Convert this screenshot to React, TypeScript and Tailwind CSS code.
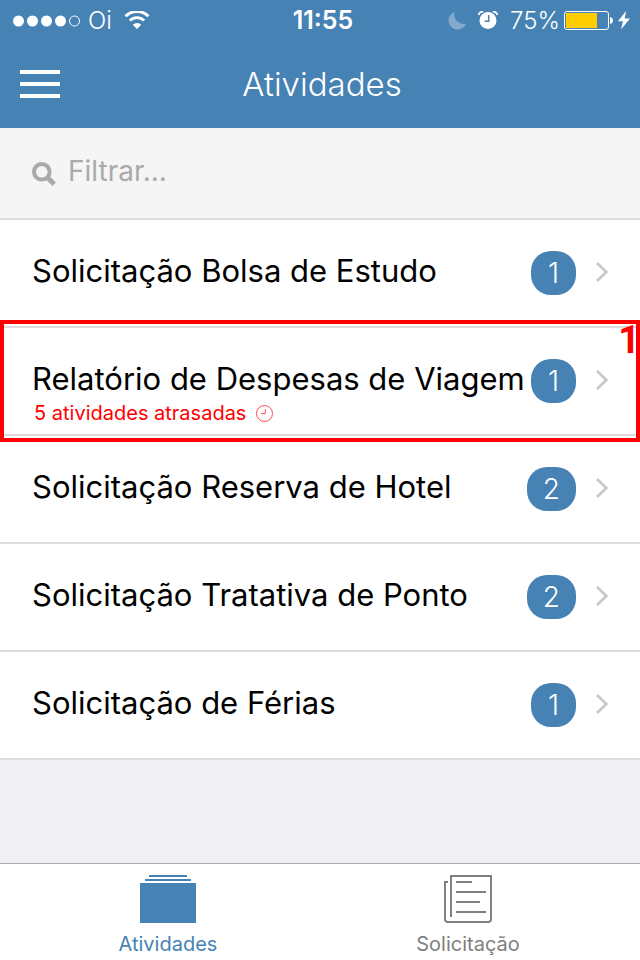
import React from "react";

interface Activity {
  id: string;
  title: string;
  count: number;
  late?: number;
}

const activities: Activity[] = [
  { id: "bolsa", title: "Solicitação Bolsa de Estudo", count: 1 },
  { id: "viagem", title: "Relatório de Despesas de Viagem", count: 1, late: 5 },
  { id: "hotel", title: "Solicitação Reserva de Hotel", count: 2 },
  { id: "ponto", title: "Solicitação Tratativa de Ponto", count: 2 },
  { id: "ferias", title: "Solicitação de Férias", count: 1 },
];

function StatusBar() {
  return (
    <div className="grid h-10 grid-cols-[1fr_auto_1fr] items-center pt-0.5 pr-2.5 pl-3">
      <div className="flex items-center">
        <svg width="68" height="12" viewBox="0 0 68 12" fill="#fff">
          <circle cx="6.500" cy="6" r="5.500" />
          <circle cx="20.500" cy="6" r="5.500" />
          <circle cx="34.500" cy="6" r="5.500" />
          <circle cx="48.500" cy="6" r="5.500" />
          <circle cx="62.500" cy="6" r="5" fill="none" stroke="#fff" />
        </svg>
        <span className="ml-2 text-2xl font-light">Oi</span>
        <svg className="ml-3" width="26" height="20" viewBox="0 0 26 20" fill="none">
          <path d="M1.500 5.200a16.400 16.400 0 0 1 23 0" stroke="#fff" strokeWidth="3" />
          <path d="M5.800 9.600a10.300 10.300 0 0 1 14.400 0" stroke="#fff" strokeWidth="2.800" />
          <path d="M13 18l-4.200-4.300a6 6 0 0 1 8.400 0z" fill="#fff" />
        </svg>
      </div>

      <span className="pl-1 text-[25px] font-semibold">11:55</span>

      <div className="flex items-center justify-end">
        <svg width="18" height="18" viewBox="0 0 18 18">
          <path
            d="M6.600 0A9 9 0 1 0 18 11.600 9.400 9.400 0 0 1 6.600 0z"
            fill="#82aacd"
          />
        </svg>
        <svg className="ml-3" width="20" height="20" viewBox="0 0 20 20" fill="none">
          <circle cx="10" cy="9.500" r="8.500" fill="#fff" />
          <path d="M.8 4C1 1.500 2.800.6 5.200.6M19.200 4C19 1.500 17.200.6 14.800.6" stroke="#fff" strokeWidth="1.800" />
          <path d="M10.700 4v6.300H6.500" stroke="#4682b4" strokeWidth="1.500" />
        </svg>
        <span className="ml-3 text-2xl font-light">75%</span>
        <svg className="ml-1" width="50" height="20" viewBox="0 0 50 20">
          <rect x="0.500" y="0.500" width="44" height="18" rx="2.500" fill="none" stroke="#fff" />
          <rect x="2" y="2" width="31" height="15" fill="#fc0" />
          <path d="M46 6c4 1 4 6 0 7z" fill="#fff" />
        </svg>
        <svg className="ml-1" width="12" height="20" viewBox="0 0 12 20">
          <path d="M8 0L0 10.200h5L3 18.500l9-11H6.700z" fill="#fff" />
        </svg>
      </div>
    </div>
  );
}

function LateClock() {
  return (
    <svg width="17" height="17" viewBox="0 0 17 17" fill="none" stroke="#f00" strokeWidth="0.700">
      <circle cx="8.500" cy="8.500" r="8" />
      <path d="M9.300 4v4.700H5" />
    </svg>
  );
}

function ActivityRow({ activity }: { activity: Activity }) {
  return (
    <li className="relative border-b-2 border-[#dcdcdc] bg-white">
      <a href={`#${activity.id}`} className="flex items-start pt-8 pr-8 pb-3 pl-8">
        <div className="min-h-[62px] min-w-0 flex-1">
          <h2 className="text-[31px] leading-[38px] whitespace-nowrap">{activity.title}</h2>
          {activity.late && (
            <p className="flex items-center gap-2.5 pt-1.5 pl-0.5 text-xl leading-[18px] text-[#f00]">
              {activity.late} atividades atrasadas
              <LateClock />
            </p>
          )}
        </div>
        <span className="-mt-px h-11 min-w-[45px] rounded-[20px] bg-[#4682b4] px-4 text-center text-[28px] leading-[45px] font-light text-white">
          {activity.count}
        </span>
        <svg className="mt-2.5 ml-5" width="12" height="20" viewBox="0 0 12 20" fill="none">
          <path d="M1 1l9.300 9L1 19" stroke="#c7c7cc" strokeWidth="2.600" />
        </svg>
      </a>

      {/* highlight around the late activity */}
      {activity.late && (
        <div className="pointer-events-none absolute inset-x-0 -top-2 -bottom-2 z-10 border-4 border-[#f00]">
          <span className="absolute -top-1 -right-1 font-[Roboto,sans-serif] text-[38px] leading-10 font-bold text-[#f00]">
            1
          </span>
        </div>
      )}
    </li>
  );
}

export default function App() {
  const [filter, setFilter] = React.useState("");

  const visible = activities.filter((activity) =>
    activity.title.toLowerCase().includes(filter.toLowerCase())
  );

  return (
    <div className="flex min-h-screen flex-col bg-[#efeff4] font-[Inter,sans-serif] text-black">
      <header className="bg-[#4682b4] text-white">
        <StatusBar />
        <div className="grid h-22 grid-cols-[1fr_auto_1fr] items-center pr-4 pl-5">
          <button type="button" aria-label="Menu" className="flex w-10 flex-col gap-2">
            <span className="h-1 bg-white" />
            <span className="h-1 bg-white" />
            <span className="h-1 bg-white" />
          </button>
          <h1 className="pt-0.5 text-[33px] font-light">Atividades</h1>
        </div>
      </header>

      <label className="flex h-23 items-center border-b-2 border-[#dcdcdc] bg-[#f5f5f5] px-8">
        <svg className="mt-0.5 shrink-0" width="24" height="24" viewBox="0 0 24 24" fill="none" stroke="#aaa">
          <circle cx="9.800" cy="9.800" r="7.800" strokeWidth="4" />
          <path d="M15.500 15.500l6.700 6.700" strokeWidth="5" />
        </svg>
        <input
          type="text"
          aria-label="Filtrar"
          placeholder="Filtrar..."
          value={filter}
          onChange={(e) => setFilter(e.target.value)}
          className="mb-1 ml-3 min-w-0 flex-1 bg-transparent text-[28px] outline-none placeholder:text-[#aaa]"
        />
      </label>

      <main className="flex-1">
        <ul>
          {visible.map((activity) => (
            <ActivityRow key={activity.id} activity={activity} />
          ))}
        </ul>
      </main>

      <nav className="grid h-[97px] grid-cols-2 border-t border-[#aaa] bg-white pr-5.5 pl-4.5 text-xl">
        <a href="#atividades" className="flex flex-col items-center pt-2.5 text-[#4682b4]">
          <svg width="56" height="50" viewBox="0 0 56 50" fill="#4682b4">
            <path d="M9 1h38v2H9zM5 5h46v2H5zM0 9h56v40H0z" />
          </svg>
          <span className="mt-1.5">Atividades</span>
        </a>
        <a href="#solicitacao" className="flex flex-col items-center pt-2.5 text-[#808080]">
          <svg width="48" height="50" viewBox="0 0 48 50" fill="none" stroke="#808080" strokeWidth="2">
            <path d="M7 43V2h40v43a3 3 0 0 1-3 3H4a3 3 0 0 1-3-3V8h3" />
            <path d="M12 8h16M12 18h30M12 28h24M12 38h30" />
          </svg>
          <span className="mt-1.5">Solicitação</span>
        </a>
      </nav>
    </div>
  );
}
